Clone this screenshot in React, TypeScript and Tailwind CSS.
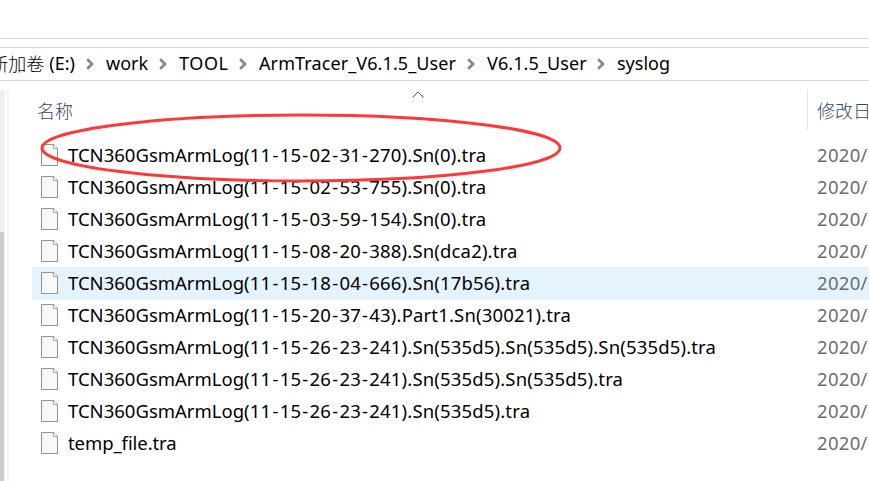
import React from "react";

type Crumb = { label: string; className: string };

const crumbs: Crumb[] = [
  { label: "work", className: "w-[42px]" },
  { label: "TOOL", className: "w-[49px] tracking-[0.6px]" },
  { label: "ArmTracer_V6.1.5_User", className: "w-[197px] tracking-[0.1px]" },
  { label: "V6.1.5_User", className: "w-[99px] tracking-[0.1px]" },
  { label: "syslog", className: "w-[54px]" },
];

type FileRow = { name: string; selected?: boolean };

const files: FileRow[] = [
  { name: "TCN360GsmArmLog(11-15-02-31-270).Sn(0).tra" },
  { name: "TCN360GsmArmLog(11-15-02-53-755).Sn(0).tra" },
  { name: "TCN360GsmArmLog(11-15-03-59-154).Sn(0).tra" },
  { name: "TCN360GsmArmLog(11-15-08-20-388).Sn(dca2).tra" },
  { name: "TCN360GsmArmLog(11-15-18-04-666).Sn(17b56).tra", selected: true },
  { name: "TCN360GsmArmLog(11-15-20-37-43).Part1.Sn(30021).tra" },
  { name: "TCN360GsmArmLog(11-15-26-23-241).Sn(535d5).Sn(535d5).Sn(535d5).tra" },
  { name: "TCN360GsmArmLog(11-15-26-23-241).Sn(535d5).Sn(535d5).tra" },
  { name: "TCN360GsmArmLog(11-15-26-23-241).Sn(535d5).tra" },
  { name: "temp_file.tra" },
];

function Chevron() {
  return (
    <svg className="mt-[2px] mr-[1px] h-[12px] w-[8px] shrink-0" viewBox="0 0 8 12" fill="none">
      <path d="M1.2 1.2 L6 6 L1.2 10.8" stroke="#868686" strokeWidth="2.7" />
    </svg>
  );
}

function FileIcon() {
  return (
    <svg className="h-[22px] w-[17px] shrink-0" viewBox="0 0 17 22" fill="none">
      <defs>
        <linearGradient id="paper" x1="0" y1="0" x2="1" y2="1">
          <stop offset="0" stopColor="#f4f5f6" />
          <stop offset="1" stopColor="#fbfcfd" />
        </linearGradient>
      </defs>
      <path d="M.5 .5H13L16.5 4.5V21.5H.5Z" fill="url(#paper)" stroke="#929292" />
      <path d="M12.5 .5V4.5H16.5" fill="#fff" stroke="#a0a0a0" />
    </svg>
  );
}

function FileName({ name }: { name: string }) {
  const split = name.indexOf("(");
  if (split < 0) return <span className="leading-[32px] tracking-[-0.08px]">{name}</span>;
  const parts = name.slice(split).split("-");
  return (
    <span className="leading-[32px]">
      {name.slice(0, split)}
      <span className="tracking-[0.16px]">
        {parts.map((part, i) => (
          <React.Fragment key={i}>
            {i > 0 && <span className="mx-[1.15px]">-</span>}
            {part}
          </React.Fragment>
        ))}
      </span>
    </span>
  );
}

export default function App() {
  return (
    <div className="relative flex h-[481px] w-[869px] flex-col overflow-hidden bg-white font-['Noto_Sans','Noto_Sans_CJK_SC',sans-serif] text-[18.5px] whitespace-nowrap text-black">
      <div className="h-[39px] shrink-0 border-b border-[#d9d9d9]" />
      <nav className="mt-[8px] flex h-[34px] shrink-0 items-center border-y border-[#d9d9d9] pb-[2px] text-[18px]">
        <div className="flex w-[75px] shrink-0 justify-end">
          <span className="font-['Noto_Sans_CJK_SC',sans-serif] font-light">新加卷</span>
          <span className="ml-[5px]">(E:)</span>
        </div>
        {crumbs.map((c) => (
          <React.Fragment key={c.label}>
            <div className="flex w-[31px] shrink-0 justify-center">
              <Chevron />
            </div>
            <span className={`${c.className} shrink-0`}>{c.label}</span>
          </React.Fragment>
        ))}
      </nav>
      <div className="mt-[9px] flex min-h-0 flex-1">
        <div className="h-full w-[5px] shrink-0 bg-[#f0f0f0] pt-[142px]">
          <div className="h-full w-[4px] bg-[#cdcdcd]" />
        </div>
        <div className="ml-[2px] w-[2px] shrink-0 bg-[#f5f5f5]" />
        <main className="ml-[23px] flex min-w-0 flex-1 flex-col">
          <header className="flex h-[40px] shrink-0 items-center font-['Noto_Sans_CJK_SC',sans-serif] text-[18px] font-light text-[#33496a]">
            <div className="flex w-[776px] shrink-0 justify-between self-stretch border-r border-[#e2e2e2]">
              <span className="ml-[5px] self-center">名称</span>
              <svg className="mt-[1px] mr-[383px] h-[7px] w-[12px]" viewBox="0 0 12 7" fill="none">
                <path d="M.6 6.4L6 1L11.4 6.4" stroke="#555" />
              </svg>
            </div>
            <span className="ml-[9px]">修改日期</span>
          </header>
          <div className="mt-[9px]">
            {files.map((f) => (
              <div key={f.name} className={`flex h-[32px] ${f.selected ? "bg-[#e5f3ff] shadow-[0_1px_0_#e5f3ff]" : ""}`}>
                <div className="flex w-[785px] shrink-0 pl-[9px]">
                  <div className="mt-[5px] mr-[10px]">
                    <FileIcon />
                  </div>
                  <FileName name={f.name} />
                </div>
                <span className="leading-[32px] tracking-[0.3px] text-[#6d6d6d]">2020/</span>
              </div>
            ))}
          </div>
        </main>
      </div>
      <svg className="absolute top-[110px] left-[36px] h-[76px] w-[530px]" viewBox="36 110 530 76" fill="none">
        <ellipse cx="301" cy="148" rx="259" ry="33" stroke="#fb3b3b" strokeWidth="3" />
      </svg>
    </div>
  );
}
